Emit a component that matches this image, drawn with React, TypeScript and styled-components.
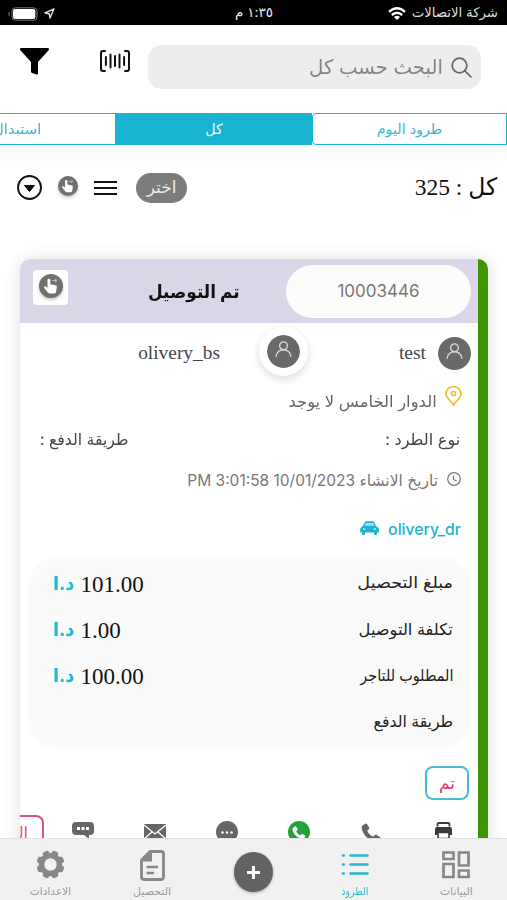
import React from 'react';
import styled, { createGlobalStyle, css } from 'styled-components';

const cyan = '#1ab4d3';
const sans = "'Inter', 'DejaVu Sans', sans-serif";
const serif = "'Liberation Serif', 'DejaVu Sans', serif";

const Global = createGlobalStyle`
  * { box-sizing: border-box; }
  body { margin: 0; background: #fff; }
  svg { display: block; flex: none; overflow: visible; }
`;

const Screen = styled.div`
  width: 507px; height: 900px; display: flex; flex-direction: column;
  overflow: hidden; background: #fff; font-family: ${sans}; direction: ltr;
`;

const Text = styled.span<{ $size: number; $color?: string; $stretch?: number; $from?: string; $weight?: number; $serif?: boolean; $lift?: number }>`
  display: block; flex: none; white-space: nowrap; direction: rtl; line-height: 1;
  font-family: ${p => (p.$serif ? serif : sans)};
  font-size: ${p => p.$size}px;
  font-weight: ${p => p.$weight ?? 400};
  color: ${p => p.$color ?? '#222'};
  transform-origin: ${p => p.$from ?? 'center'};
  transform: translateY(${p => p.$lift ?? 0}px) scaleX(${p => p.$stretch ?? 1});
`;

const StatusBar = styled.header`
  height: 25px; flex: none; background: #000; padding: 2px 9px 0 10px;
  display: grid; grid-template-columns: 1fr auto 1fr; align-items: center;
`;
const StatusGroup = styled.div<{ $end?: boolean }>`
  display: flex; align-items: center; gap: 6px;
  justify-content: ${p => (p.$end ? 'flex-end' : 'flex-start')};
`;

const Header = styled.div`
  height: 88px; flex: none; display: flex; align-items: flex-start; padding: 20px 26px 0 20px;
`;
const FilterButton = styled.div`width: 29px; margin: 3px 51px 0 0;`;
const ScanButton = styled.div`width: 30px; margin: 5px 18px 0 0;`;
const Search = styled.div`
  flex: 1; height: 44px; border-radius: 14px; background: #ededed;
  display: flex; align-items: center; justify-content: flex-end; gap: 8px; padding-right: 9px;
`;

const Tabs = styled.nav`
  height: 32px; flex: none; display: flex; flex-direction: row-reverse; overflow: hidden;
`;
const Tab = styled.div<{ $active?: boolean; $first?: boolean }>`
  flex: 0 0 ${p => (p.$first ? 195 : 197)}px; display: flex; align-items: center; justify-content: center;
  border: solid ${cyan}; border-width: 1.5px ${p => (p.$first ? 1 : 0)}px 1.5px 1px;
  border-radius: ${p => (p.$first ? '4px 0 0 4px' : 0)};
  background: ${p => (p.$active ? cyan : '#fff')};
`;

const Toolbar = styled.div`
  height: 114px; flex: none; display: flex; align-items: flex-start; padding: 28px 10px 0 17px;
`;
const ToolIcon = styled.div<{ $gap: number; $down: number }>`
  margin: ${p => p.$down}px ${p => p.$gap}px 0 0;
`;
const SelectPill = styled.div`
  width: 51px; height: 30px; border-radius: 15px; background: #7c7c7c;
  display: flex; align-items: center; justify-content: center; margin-right: auto;
`;

const Feed = styled.main`
  flex: 1; min-height: 0; padding: 0 19px 0 20px;
`;
const Card = styled.article`
  height: 700px; border-radius: 10px; border-right: 10px solid #409400;
  box-shadow: 0 0 18px rgba(0,0,0,.13); background: #fff;
`;
const CardHead = styled.div`
  height: 64px; background: #dad6e7; border-radius: 10px 0 0 0;
  display: flex; align-items: flex-start; padding: 6px 7px 0 13px;
`;
const HandTile = styled.div`
  width: 35px; height: 35px; margin-top: 5px; border-radius: 4px; background: #fff;
  display: flex; justify-content: center; padding-top: 4px;
`;
const CardTitle = styled.div`flex: 1; height: 53px; display: flex; align-items: center; justify-content: center; padding-left: 33px;`;
const NumberPill = styled.div`
  width: 185px; height: 53px; border-radius: 27px; background: #fcfcfb;
  display: flex; align-items: center; justify-content: center;
`;
const Row = styled.div<{ $h: number; $right?: number; $left?: number; $gap?: number; $between?: boolean }>`
  height: ${p => p.$h}px; display: flex; align-items: center;
  justify-content: ${p => (p.$between ? 'space-between' : 'flex-end')};
  gap: ${p => p.$gap ?? 0}px;
  padding: 0 ${p => p.$right ?? 0}px 0 ${p => p.$left ?? 0}px;
`;
const PinSlot = styled.div`margin-bottom: 10px;`;
const Person = styled.div<{ $width: number; $gap: number }>`
  width: ${p => p.$width}px; display: flex; align-items: center; justify-content: flex-end; gap: ${p => p.$gap}px;
`;
const Avatar = styled.div<{ $ring?: boolean }>`
  width: 33px; height: 33px; border-radius: 50%; background: #696969; flex: none;
  display: flex; align-items: center; justify-content: center; padding-bottom: 3px;
  ${p => p.$ring && css`
    width: 49px; height: 49px; border: 8px solid #fff; margin-bottom: 4px;
    box-shadow: 0 3px 9px rgba(0,0,0,.14);
    background-clip: padding-box;
  `}
`;

const Amounts = styled.section`
  width: 442px; height: 193px; margin-left: 8px; border-radius: 30px; background: #fafafa;
  padding: 4px 17px 0 25px;
`;
const AmountRow = styled.div`
  height: 46.4px; display: flex; align-items: center; justify-content: space-between;
`;
const Money = styled.div`display: flex; align-items: center; gap: 5px;`;

const DoneChip = styled.div`
  width: 44px; height: 34px; margin: 17px 9px 0 auto; border: 2px solid #45bdd8; border-radius: 8px;
  display: flex; align-items: center; justify-content: center;
`;
const Actions = styled.div`
  display: flex; align-items: flex-start; margin-top: 15px; overflow: hidden;
`;
const PinkChip = styled.div`
  width: 24px; height: 34px; flex: none; border: solid #d9517d; border-width: 2px 2px 2px 0;
  border-radius: 0 8px 8px 0; display: flex; align-items: center; justify-content: flex-end;
  padding-right: 14px; overflow: hidden;
`;
const ActionList = styled.div`
  flex: 1; display: grid; grid-template-columns: repeat(6, 72px); padding: 6px 0 0 3px; justify-items: center;
`;

const BottomNav = styled.nav`
  height: 62px; flex: none; background: #f2f1f1; border-top: 1px solid #e2e2e2;
  display: grid; grid-template-columns: repeat(5, 101.4px); justify-items: center;
`;
const NavItem = styled.div`
  display: flex; flex-direction: column; align-items: center; justify-content: space-between; padding: 11px 0 3px;
`;
const AddButton = styled.div`
  width: 39px; height: 40px; border-radius: 50%; background: #636363; margin-top: 13px;
  display: flex; align-items: center; justify-content: center; box-shadow: 0 1px 3px rgba(0,0,0,.3);
`;
const HandSvg = styled.svg`filter: drop-shadow(0 2px 1.5px rgba(0,0,0,.22));`;

const Hand = ({ size }: { size: number }) => (
  <HandSvg width={size} height={size} viewBox="0 0 24 24">
    <circle cx="12" cy="12" r="12" fill="#707070" />
    <path d="M8.500 6.100c0-1.800 2.800-1.800 2.800 0v4.200l5.100 1c1.200.3 1.500.9 1.400 1.800l-.7 4.600c-.2 1-.8 1.700-1.900 1.700h-4.600c-.7 0-1.300-.3-1.700-.8l-3.700-4.500c-.8-1.200.5-2.200 1.500-1.500l1.800 1.200z" fill="#fff" />
    <path d="M13 6.500h4.500M16 4.800l1.700 1.700L16 8.200" fill="none" stroke="#bbb" strokeWidth="1.100" />
  </HandSvg>
);
const PersonIcon = () => (
  <svg width="17" height="17" viewBox="0 0 18 18" fill="none" stroke="#ddd" strokeWidth="1.400">
    <circle cx="9" cy="5" r="4.100" /><path d="M1.200 16.200C1.500 7 16.500 7 16.800 16.200" strokeLinecap="round" />
  </svg>
);
const handset = 'M1.4 2.8 4.1.7c.8-.5 1.5-.3 2 .5l2 3.3c.4.7.2 1.3-.3 1.8L6.2 7.8c1.2 2.7 3.2 4.7 5.9 6l1.700-1.700c.6-.5 1.100-.6 1.800-.2l3.200 2c.8.5.9 1.200.4 2l-2 2.400c-.6.7-1.400.9-2.400.7C7.100 17.400 2.100 12 .7 5.200.5 4.200.6 3.400 1.400 2.800z';

const amounts: [string, string | null, number][] = [
  ['مبلغ التحصيل', '101.00', 1.1],
  ['تكلفة التوصيل', '1.00', 1.015],
  ['المطلوب للتاجر', '100.00', 0.9],
  ['طريقة الدفع', null, 0.98],
];

export default function App() {
  return (
    <Screen>
      <Global />
      <StatusBar>
        <StatusGroup>
          <svg width="28" height="14" viewBox="0 0 28 14">
            <rect x="2" y=".8" width="25" height="12.400" rx="3.200" fill="none" stroke="#777" />
            <rect x="3" y="2" width="22.400" height="10" rx="2" fill="#fff" />
            <path d="M-1 5v4" stroke="#777" />
          </svg>
          <svg width="11" height="11" viewBox="0 0 11 11"><path d="M10 .8 1 5l4.200.7.8 4.300z" fill="none" stroke="#ddd" strokeWidth="1.400" strokeLinejoin="round" /></svg>
        </StatusGroup>
        <Text $size={13.5} $color="#eee" $lift={-1}>١:٣٥ م</Text>
        <StatusGroup $end>
          <svg width="18" height="14" viewBox="0 0 18 14" fill="none" stroke="#fff" strokeWidth="2.400">
            <path d="M1 4.900Q9-2.300 17 4.900M3.800 8Q9 3.400 14.200 8" /><path d="M6 10Q9 7.600 12 10L9 13z" fill="#fff" stroke="none" />
          </svg>
          <Text $size={13.3} $color="#ddd" $lift={-1}>شركة الاتصالات</Text>
        </StatusGroup>
      </StatusBar>

      <Header>
        <FilterButton>
          <svg width="29" height="27" viewBox="0 0 29 27"><path d="M1.200 0h26.600c1.200 0 1.600 1.400.8 2.300L18 14v11.200c0 1.400-1 1.700-2 1.100l-4-1.200c-.6-.4-1-.9-1-1.600V14L.4 2.300C-.4 1.400 0 0 1.200 0z" /></svg>
        </FilterButton>
        <ScanButton>
          <svg width="30" height="22" viewBox="0 0 30 22" fill="none" stroke="#111" strokeWidth="2" strokeLinecap="round">
            <path d="M5 1H3Q1 1 1 3v16q0 2 2 2h2M25 1h2q2 0 2 2v16q0 2-2 2h-2" />
            <path d="M5.900 7v8M10.500 4.500v13M15 6v10M19.500 4.500v13M24.100 7v8" />
          </svg>
        </ScanButton>
        <Search>
          <Text $size={20} $color="#858585" $from="right" $stretch={0.985}>البحث حسب كل</Text>
          <svg width="21" height="21" viewBox="0 0 21 21" fill="none" stroke="#666" strokeWidth="1.700" strokeLinecap="round"><circle cx="8.500" cy="8.500" r="7.300" /><path d="m14 14 6 6" /></svg>
        </Search>
      </Header>

      <Tabs>
        <Tab $first><Text $size={14.3} $color="#42b6d0">طرود اليوم</Text></Tab>
        <Tab $active><Text $size={14.3} $color="#e8fbff">كل</Text></Tab>
        <Tab><Text $size={14.3} $color="#42b6d0" $stretch={1.04}>استبدال</Text></Tab>
      </Tabs>

      <Toolbar>
        <ToolIcon $gap={16} $down={2}>
          <svg width="25" height="25" viewBox="0 0 25 25"><circle cx="12.500" cy="12.500" r="11.500" fill="none" stroke="#111" strokeWidth="1.900" /><path d="M7.500 10.500h10l-5 6z" stroke="#111" strokeLinejoin="round" /></svg>
        </ToolIcon>
        <ToolIcon $gap={16} $down={3}><Hand size={20} /></ToolIcon>
        <ToolIcon $gap={19} $down={8}>
          <svg width="23" height="14" viewBox="0 0 23 14"><path d="M0 1h23M0 7h23M0 13h23" stroke="#111" strokeWidth="1.900" /></svg>
        </ToolIcon>
        <SelectPill><Text $size={17} $color="#eee" $lift={-1}>اختر</Text></SelectPill>
        <Text $size={24} $serif $color="#111" $from="right" $lift={2} $stretch={0.98}>كل : 325</Text>
      </Toolbar>

      <Feed>
        <Card>
          <CardHead>
            <HandTile><Hand size={24} /></HandTile>
            <CardTitle><Text $size={18} $weight={700} $color="#111" $stretch={0.94}>تم التوصيل</Text></CardTitle>
            <NumberPill><Text $size={17} $color="#777">10003446</Text></NumberPill>
          </CardHead>
          <Row $h={60} $right={7}>
            <Person $width={169} $gap={15}>
              <Text $size={19.4} $serif $color="#454550">olivery_bs</Text>
            </Person>
            <Row $h={60} $left={39}><Avatar $ring><PersonIcon /></Avatar></Row>
            <Person $width={163} $gap={12}>
              <Text $size={19.5} $serif $color="#454550">test</Text>
              <Avatar><PersonIcon /></Avatar>
            </Person>
          </Row>
          <Row $h={36} $right={16} $gap={8}>
            <Text $size={16} $color="#666" $from="right" $stretch={1.025}>الدوار الخامس لا يوجد</Text>
            <PinSlot>
              <svg width="17" height="20" viewBox="0 0 17 20" fill="none" stroke="#f5bd35" strokeWidth="1.700"><path d="M8.500 19C6.500 15 1 12 1 8a7.500 7.500 0 0 1 15 0c0 4-5.500 7-7.500 11z" /><circle cx="8.500" cy="7.500" r="2" /></svg>
            </PinSlot>
          </Row>
          <Row $h={40} $right={18} $left={20} $between>
            <Text $size={16} $color="#444" $from="left" $stretch={0.98}>طريقة الدفع :</Text>
            <Text $size={16} $color="#444" $from="right" $stretch={1.01}>نوع الطرد :</Text>
          </Row>
          <Row $h={41} $right={17} $gap={9}>
            <Text $size={15.5} $color="#777" $from="right" $lift={1}>تاريخ الانشاء 10/01/2023 3:01:58 PM</Text>
            <svg width="14" height="14" viewBox="0 0 14 14" fill="none" stroke="#777" strokeWidth="1.200"><circle cx="7" cy="6" r="6.300" /><path d="M6.500 2.500v4L9.500 8" /></svg>
          </Row>
          <Row $h={56} $right={17} $gap={8}>
            <svg width="19" height="14" viewBox="0 0 19 14"><path d="M3 5 4.600 1.500Q5 .2 6.500.2h6Q14 .2 14.400 1.500L16 5l2 1.500c.6.4.8.8.8 1.500v3.500H17V13q0 1-1 1h-1q-1 0-1-1v-1.500H5V13q0 1-1 1H3q-1 0-1-1v-1.500H.2V8c0-.7.2-1.100.8-1.500z" fill="#20b3cd" /><path d="M4.500 4.700 5.700 2h7.600l1.200 2.700z" fill="#a7e0ec" /><path d="m3 7.700 2.500.8M16 7.700l-2.500.8" stroke="#e4f8fb" strokeWidth="1.200" /></svg>
            <Text $size={16} $weight={500} $color="#20b3cd" $from="right" $stretch={0.985} $lift={1}>olivery_dr</Text>
          </Row>
          <Amounts>
            {amounts.map(([label, value, stretch]) => (
              <AmountRow key={label}>
                <Money>
                  {value && <><Text $size={19} $weight={700} $color="#20b9d4" $from="left" $stretch={0.95}>د.ا</Text><Text $size={23} $serif $color="#111" $from="left" $lift={1}>{value}</Text></>}
                </Money>
                <Text $size={16} $color="#222" $from="right" $stretch={stretch} $lift={-1}>{label}</Text>
              </AmountRow>
            ))}
          </Amounts>
          <DoneChip><Text $size={17} $color="#e43467">تم</Text></DoneChip>
          <Actions>
            <PinkChip><Text $size={16} $color="#d9517d">المزيد</Text></PinkChip>
            <ActionList>
              <svg width="22" height="20" viewBox="0 0 22 20"><path d="M4 1h14q4 0 4 4v5q0 4-4 4h-1v4l-5-4H4q-4 0-4-4V5q0-4 4-4z" fill="#666" /><path d="M5 6h3v3H5zM9.500 6h3v3h-3zM14 6h3v3h-3z" fill="#fff" /></svg>
              <svg width="22" height="20" viewBox="0 0 22 20"><path d="M0 3h22v17H0z" fill="#666" /><path d="m0 4 11 9 11-9M0 18l8-7M22 18l-8-7" fill="none" stroke="#fff" strokeWidth="1.300" /></svg>
              <svg width="22" height="22" viewBox="0 0 22 22"><circle cx="11" cy="11" r="11" fill="#666" /><g fill="#fff"><circle cx="6.500" cy="11.500" r="1.300" /><circle cx="11" cy="11.500" r="1.300" /><circle cx="15.500" cy="11.500" r="1.300" /></g></svg>
              <svg width="22" height="22" viewBox="0 0 22 22"><circle cx="11" cy="11" r="11" fill="#25a13b" /><path transform="translate(4 5) scale(.68)" d={handset} fill="#fff" /></svg>
              <svg width="20" height="22" viewBox="0 0 20 22"><path transform="translate(0 2)" d={handset} fill="#666" /></svg>
              <svg width="17" height="20" viewBox="0 0 17 20"><path d="M2.500 5.500V3.500Q2.500 2 4 2h9q1.500 0 1.500 1.500v2" fill="none" stroke="#3d3939" strokeWidth="1.800" /><path d="M2 6h13q2 0 2 2v6H0V8q0-2 2-2z" fill="#3d3939" /><path d="M3 11.500h11v6H3z" fill="#fff" stroke="#3d3939" strokeWidth="1.600" /></svg>
            </ActionList>
          </Actions>
        </Card>
      </Feed>

      <BottomNav>
        <NavItem>
          <svg width="29" height="29" viewBox="-14.500 -14.500 29 29">
            <g fill="#888">{[22.5, 67.5, 112.5, 157.5].map(a => <rect key={a} x="-3.300" y="-14" width="6.600" height="28" rx="2" transform={`rotate(${a})`} />)}<circle r="11.700" /></g><circle r="6.200" fill="#f2f1f1" />
          </svg>
          <Text $size={11} $color="#999" $stretch={0.96}>الاعدادات</Text>
        </NavItem>
        <NavItem>
          <svg width="25" height="31" viewBox="0 0 25 31"><path d="M10 1.500h11q2.500 0 2.500 2.500v23q0 2.500-2.500 2.500H4q-2.500 0-2.500-2.500V10z" fill="none" stroke="#888" strokeWidth="2.800" /><path d="M1 11.500 12 0v11.500z" fill="#888" /><path d="M6.500 17h11.500M6.500 23h7.500" stroke="#888" strokeWidth="2.600" /></svg>
          <Text $size={11} $color="#999">التحصيل</Text>
        </NavItem>
        <AddButton><svg width="13" height="13" viewBox="0 0 13 13"><path d="M6.500 0v13M0 6.500h13" stroke="#fff" strokeWidth="3" /></svg></AddButton>
        <NavItem>
          <svg width="28" height="29" viewBox="0 0 28 29" stroke="#25b5d2" strokeWidth="2.600" strokeLinecap="round"><path d="M9.500 5.500h17M9.500 14.500h17M9.500 23.500h17M2 5.500h.8M2 14.500h.8M2 23.500h.8" /></svg>
          <Text $size={11} $color="#38b8d3" $stretch={0.86}>الطرود</Text>
        </NavItem>
        <NavItem>
          <svg width="28" height="29" viewBox="0 0 28 29" fill="none" stroke="#888" strokeWidth="2.700"><path d="M1.500 2.500h10v6.500h-10zM17 2.500h9.500v13H17zM1.500 14h10v13h-10zM17 20.500h9.500V27H17z" /></svg>
          <Text $size={11} $color="#999">البيانات</Text>
        </NavItem>
      </BottomNav>
    </Screen>
  );
}
